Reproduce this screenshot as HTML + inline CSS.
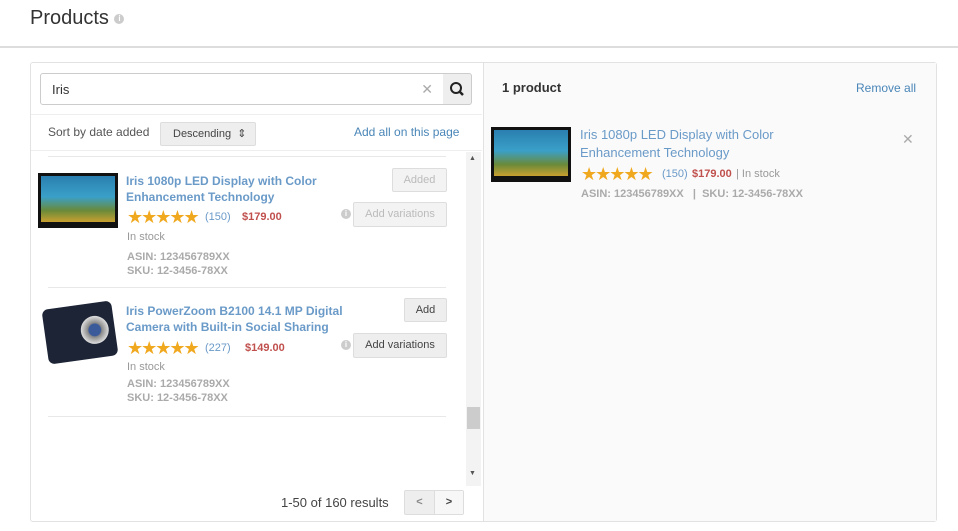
<!DOCTYPE html>
<html><head><meta charset="utf-8"><style>
*{box-sizing:border-box;margin:0;padding:0}
body{width:958px;height:531px;background:#fff;font-family:"Liberation Sans",Arial,sans-serif;position:relative;overflow:hidden;color:#333}
.a{position:absolute}
.link{color:#4a86b8}
.t{font-size:12px;font-weight:bold;color:#6a9ac8;line-height:16px}
.g{font-size:11px;color:#999}
.price{color:#c0504d;font-size:11px;font-weight:bold}
.stars{color:#f0a81e;font-size:18px;letter-spacing:-2px;line-height:18px}
.btn{border:1px solid #ddd;background:#eee;border-radius:2px;font-size:11px;color:#444;text-align:center}
.tv{background:#111;padding:3px 3px 6px}
.tv div{width:100%;height:100%;background:linear-gradient(180deg,#2a7fb0 0%,#3aa0c8 45%,#6a8a3a 75%,#c8a030 100%)}
.info{display:inline-block;width:10px;height:10px;border-radius:50%;background:#ccc;color:#fff;font-size:8px;font-weight:bold;text-align:center;line-height:10px}
</style></head><body>
<div class="a" style="left:30px;top:7px;font-size:20px;color:#333">Products <span class="info" style="vertical-align:middle">i</span></div>
<div class="a" style="left:0;top:46px;width:958px;height:2px;background:#ddd"></div>
<div class="a" style="left:30px;top:62px;width:907px;height:460px;border:1px solid #e2e2e2;border-radius:3px"></div>
<div class="a" style="left:483px;top:63px;width:453px;height:458px;background:#fafafa;border-left:1px solid #e2e2e2"></div>
<div class="a" style="left:40px;top:73px;width:404px;height:32px;border:1px solid #ccc;border-radius:3px 0 0 3px;background:#fff;font-size:13px;padding:8px 11px;color:#333">Iris<span style="position:absolute;right:10px;top:7px;color:#aaa;font-size:14px">✕</span></div>
<div class="a" style="left:443px;top:73px;width:29px;height:32px;background:#eee;border:1px solid #ccc;border-left:none;border-radius:0 3px 3px 0">
<svg width="29" height="32"><circle cx="13" cy="14" r="5" fill="none" stroke="#222" stroke-width="2"/><line x1="16.5" y1="17.5" x2="20" y2="21" stroke="#222" stroke-width="2.5"/></svg></div>
<div class="a" style="left:31px;top:114px;width:451px;height:1px;background:#eee"></div>
<div class="a" style="left:48px;top:125px;font-size:12px;color:#555">Sort by date added</div>
<div class="a btn" style="left:160px;top:122px;width:96px;height:24px;line-height:22px;text-align:left;padding-left:12px">Descending &nbsp;⇕</div>
<div class="a link" style="left:354px;top:125px;font-size:12px">Add all on this page</div>
<div class="a" style="left:31px;top:150px;width:451px;height:1px;background:#eee"></div>
<div class="a" style="left:48px;top:156px;width:398px;height:1px;background:#e8e8e8"></div>
<div class="a" style="left:466px;top:152px;width:15px;height:334px;background:#f3f3f3"></div>
<div class="a" style="left:469px;top:155px;font-size:7px;color:#555">▲</div>
<div class="a" style="left:469px;top:470px;font-size:7px;color:#555">▼</div>
<div class="a" style="left:467px;top:407px;width:13px;height:22px;background:#ccc"></div>
<!-- item1 -->
<div class="a tv" style="left:38px;top:173px;width:80px;height:55px"><div></div></div>
<div class="a t" style="left:126px;top:173px;width:230px">Iris 1080p LED Display with Color Enhancement Technology</div>
<div class="a stars" style="left:127px;top:208px">★★★★★</div>
<div class="a" style="left:205px;top:211px;font-size:11px;color:#6a9ac8">(150)</div>
<div class="a price" style="left:242px;top:211px">$179.00</div>
<div class="a g" style="left:127px;top:231px">In stock</div>
<div class="a g" style="left:127px;top:250px;font-weight:bold;color:#aaa;line-height:14px">ASIN: 123456789XX<br>SKU: 12-3456-78XX</div>
<div class="a btn" style="left:392px;top:168px;width:55px;height:24px;line-height:22px;color:#bbb;background:#f3f3f3">Added</div>
<div class="a info" style="left:341px;top:209px">i</div>
<div class="a btn" style="left:353px;top:202px;width:94px;height:25px;line-height:23px;color:#bbb;background:#f3f3f3">Add variations</div>
<div class="a" style="left:48px;top:287px;width:398px;height:1px;background:#e8e8e8"></div>
<!-- item2 -->
<div class="a" style="left:45px;top:305px;width:70px;height:55px;background:#1c2436;border-radius:6px;transform:rotate(-8deg)"><div style="position:absolute;left:36px;top:13px;width:28px;height:28px;border-radius:50%;background:radial-gradient(#3a5a9a 30%,#888 35%,#ddd 70%)"></div></div>
<div class="a t" style="left:126px;top:303px;width:240px">Iris PowerZoom B2100 14.1 MP Digital Camera with Built-in Social Sharing</div>
<div class="a stars" style="left:127px;top:339px">★★★★★</div>
<div class="a" style="left:205px;top:342px;font-size:11px;color:#6a9ac8">(227)</div>
<div class="a price" style="left:245px;top:342px">$149.00</div>
<div class="a g" style="left:127px;top:361px">In stock</div>
<div class="a g" style="left:127px;top:377px;font-weight:bold;color:#aaa;line-height:14px">ASIN: 123456789XX<br>SKU: 12-3456-78XX</div>
<div class="a btn" style="left:404px;top:298px;width:43px;height:24px;line-height:22px">Add</div>
<div class="a info" style="left:341px;top:340px">i</div>
<div class="a btn" style="left:353px;top:333px;width:94px;height:25px;line-height:23px">Add variations</div>
<div class="a" style="left:48px;top:416px;width:398px;height:1px;background:#e8e8e8"></div>
<div class="a" style="left:281px;top:495px;font-size:13px;color:#444">1-50 of 160 results</div>
<div class="a btn" style="left:404px;top:490px;width:60px;height:25px;line-height:23px;font-weight:bold"><span style="display:inline-block;width:29px;color:#888">&lt;</span><span style="display:inline-block;width:29px;border-left:1px solid #ddd;background:#f7f7f7">&gt;</span></div>
<!-- right -->
<div class="a" style="left:502px;top:80px;font-size:13px;font-weight:bold;color:#333">1 product</div>
<div class="a link" style="left:856px;top:81px;font-size:12px">Remove all</div>
<div class="a tv" style="left:491px;top:127px;width:80px;height:55px"><div></div></div>
<div class="a" style="left:580px;top:126px;width:240px;font-size:13px;color:#6a9ac8;line-height:18px">Iris 1080p LED Display with Color Enhancement Technology</div>
<div class="a" style="left:902px;top:131px;color:#aaa;font-size:14px">✕</div>
<div class="a stars" style="left:581px;top:165px">★★★★★</div>
<div class="a" style="left:662px;top:168px;font-size:11px;color:#6a9ac8">(150)</div>
<div class="a price" style="left:692px;top:168px">$179.00</div>
<div class="a g" style="left:736px;top:168px">| In stock</div>
<div class="a g" style="left:581px;top:188px;font-weight:bold;color:#aaa">ASIN: 123456789XX &nbsp;&nbsp;| &nbsp;SKU: 12-3456-78XX</div>
</body></html>
